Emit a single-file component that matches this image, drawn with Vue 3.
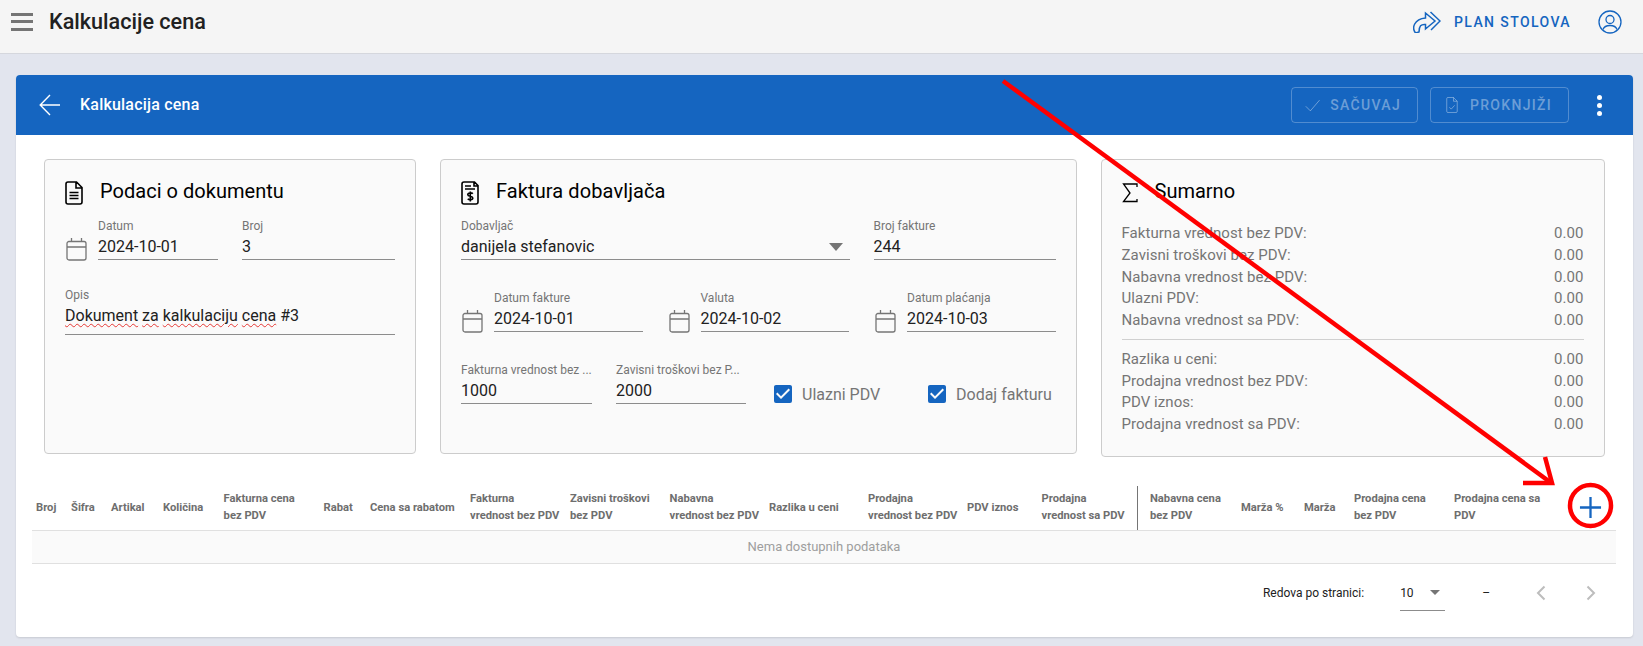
<template>
  <div class="page">
    <header class="topbar">
      <div class="burger"><i></i><i></i><i></i></div>
      <h1 class="app-title">Kalkulacije cena</h1>
      <svg class="plan-icon" viewBox="6 4 28 22"><path d="M18.500 6 28 14l-9.500 8v-4.500C14 17 12 19 12 25l-3.500 1C4.500 21 7 12 18.500 11zM23.500 5 33 14l-9 9" /></svg>
      <span class="plan-text">PLAN STOLOVA</span>
      <svg class="user-icon" viewBox="0 0 24 24"><circle cx="12" cy="12" r="11" /><circle cx="12" cy="9.500" r="4" /><path d="M5 19.500c1-3 4-4 7-4s6 1 7 4" /></svg>
    </header>

    <main class="card">
      <div class="card-head">
        <svg class="back" viewBox="0 0 22 22"><path d="M21 11H1.500M11 1 1.200 11 11 21" /></svg>
        <span class="card-title">Kalkulacija cena</span>
        <button class="head-btn save" disabled>
          <svg viewBox="0 0 20 20"><path d="M1 11l6 6L19 3" /></svg>
          SAČUVAJ
        </button>
        <button class="head-btn post" disabled>
          <svg viewBox="0 0 16 22"><path d="M1 2.500A1.500 1.500 0 0 1 2.500 1H10l5 5v13.500a1.500 1.500 0 0 1-1.500 1.500h-11A1.500 1.500 0 0 1 1 19.500zM10 1v5h5M4.500 14l2.500 2.500 4.500-5" /></svg>
          PROKNJIŽI
        </button>
        <div class="more"><i></i><i></i><i></i></div>
      </div>

      <div class="card-body">
        <div class="panels">
          <section class="panel">
            <div class="panel-title">
              <svg class="doc-icon" viewBox="0 0 18 24"><path d="M1 3a2 2 0 0 1 2-2h8.500L17 6.500V21a2 2 0 0 1-2 2H3a2 2 0 0 1-2-2zM11 1v6h6M4.500 11.500h9M4.500 14.500h9M4.500 17.500h9" /></svg>
              <span class="t1">Podaci o dokumentu</span>
            </div>
            <div class="row">
              <svg class="cal" viewBox="0 0 21 24"><path d="M1 6.500a2 2 0 0 1 2-2h15a2 2 0 0 1 2 2V21a2 2 0 0 1-2 2H3a2 2 0 0 1-2-2zM1 10h19M5.500 1v3.500M15.500 1v3.500" /></svg>
              <div class="field" style="width: 120px">
                <label>Datum</label>
                <div class="value">2024-10-01</div>
              </div>
              <div class="field grow">
                <label>Broj</label>
                <div class="value">3</div>
              </div>
            </div>
            <div class="field opis">
              <label>Opis</label>
              <div class="value">
                <span class="typo">Dokument</span> <span class="typo">za</span> <span class="typo">kalkulaciju</span> <span class="typo">cena</span> #3
              </div>
            </div>
          </section>

          <section class="panel">
            <div class="panel-title">
              <svg class="doc-icon" viewBox="0 0 18 24"><path d="M1 3a2 2 0 0 1 2-2h10.500L17 4.500V21a2 2 0 0 1-2 2H3a2 2 0 0 1-2-2zM13 1v4h4M4 5h6M4 8h10M11.800 12.800c-1-1.300-5-1.300-5 .9s5 1 5 3.200-4 2.200-5 .9M9.300 10.500v10" /></svg>
              <span class="t2">Faktura dobavljača</span>
            </div>
            <div class="row">
              <div class="field grow">
                <label>Dobavljač</label>
                <div class="value">danijela stefanovic<i class="caret"></i></div>
              </div>
              <div class="field" style="width: 182px">
                <label>Broj fakture</label>
                <div class="value">244</div>
              </div>
            </div>
            <div class="row dates">
              <div v-for="d in dates" :key="d.label" class="date">
                <svg class="cal" viewBox="0 0 21 24"><path d="M1 6.500a2 2 0 0 1 2-2h15a2 2 0 0 1 2 2V21a2 2 0 0 1-2 2H3a2 2 0 0 1-2-2zM1 10h19M5.500 1v3.500M15.500 1v3.500" /></svg>
                <div class="field grow">
                  <label>{{ d.label }}</label>
                  <div class="value">{{ d.value }}</div>
                </div>
              </div>
            </div>
            <div class="row amounts">
              <div class="field" style="width: 131px">
                <label>Fakturna vrednost bez ...</label>
                <div class="value">1000</div>
              </div>
              <div class="field" style="width: 130px">
                <label>Zavisni troškovi bez P...</label>
                <div class="value">2000</div>
              </div>
              <div class="check first">
                <svg viewBox="0 0 24 24"><path :d="checkbox" /></svg>
                <span>Ulazni PDV</span>
              </div>
              <div class="check">
                <svg viewBox="0 0 24 24"><path :d="checkbox" /></svg>
                <span>Dodaj fakturu</span>
              </div>
            </div>
          </section>

          <section class="panel tall">
            <div class="panel-title">
              <svg class="sigma" viewBox="0 0 16 20"><path d="M15 4V1H1.500L8 10l-6.500 8.500H15V16" /></svg>
              <span class="t3">Sumarno</span>
            </div>
            <div class="sums">
              <div v-for="s in sumsTop" :key="s" class="sum"><span>{{ s }}</span><span>0.00</span></div>
              <div class="sum-line"></div>
              <div v-for="s in sumsBottom" :key="s" class="sum"><span>{{ s }}</span><span>0.00</span></div>
            </div>
          </section>
        </div>

        <div class="thead">
          <div
            v-for="c in columns"
            :key="c.id"
            class="th"
            :class="{ sep: c.sep, after: c.after }"
            :style="{ width: c.w + 'px' }"
          >{{ c.name }}</div>
          <div class="th add">
            <svg viewBox="0 0 24 24"><path d="M12 1v22M1 12h22" /></svg>
          </div>
        </div>
        <div class="empty">Nema dostupnih podataka</div>
        <div class="pager">
          <span class="per-page">Redova po stranici:</span>
          <div class="page-size">10<i class="caret small"></i></div>
          <span class="range">–</span>
          <svg class="chev" viewBox="0 0 10 16"><path d="M8.500 1.500 2 8l6.500 6.500" /></svg>
          <svg class="chev" viewBox="0 0 10 16"><path d="M1.500 1.500 8 8l-6.500 6.500" /></svg>
        </div>
      </div>
    </main>

    <svg class="markup" viewBox="0 0 1643 646">
      <path d="M1003 81 1550 482" />
      <path d="M1545 457 1552 483 1523 483" />
      <circle cx="1590.500" cy="505.500" r="20.500" />
    </svg>
  </div>
</template>

<script setup>
const checkbox = 'M10,17L5,12L6.41,10.58L10,14.17L17.59,6.58L19,8M19,3H5C3.89,3 3,3.89 3,5V19A2,2 0 0,0 5,21H19A2,2 0 0,0 21,19V5C21,3.89 20.1,3 19,3Z'

const dates = [
  { label: 'Datum fakture', value: '2024-10-01' },
  { label: 'Valuta', value: '2024-10-02' },
  { label: 'Datum plaćanja', value: '2024-10-03' },
]

const sumsTop = [
  'Fakturna vrednost bez PDV:',
  'Zavisni troškovi bez PDV:',
  'Nabavna vrednost bez PDV:',
  'Ulazni PDV:',
  'Nabavna vrednost sa PDV:',
]

const sumsBottom = [
  'Razlika u ceni:',
  'Prodajna vrednost bez PDV:',
  'PDV iznos:',
  'Prodajna vrednost sa PDV:',
]

// \n = same line breaks as the real table header
const columns = [
  { id: 1, name: 'Broj', w: 35 },
  { id: 2, name: 'Šifra', w: 40 },
  { id: 3, name: 'Artikal', w: 52 },
  { id: 4, name: 'Količina', w: 60.6 },
  { id: 5, name: 'Fakturna cena\nbez PDV', w: 100 },
  { id: 6, name: 'Rabat', w: 46.4 },
  { id: 7, name: 'Cena sa rabatom', w: 100 },
  { id: 8, name: 'Fakturna\nvrednost bez PDV', w: 100 },
  { id: 9, name: 'Zavisni troškovi\nbez PDV', w: 99.6 },
  { id: 10, name: 'Nabavna\nvrednost bez PDV', w: 99.4 },
  { id: 11, name: 'Razlika u ceni', w: 99 },
  { id: 12, name: 'Prodajna\nvrednost bez PDV', w: 99 },
  { id: 13, name: 'PDV iznos', w: 74.6 },
  { id: 14, name: 'Prodajna\nvrednost sa PDV', w: 100.4, sep: true },
  { id: 15, name: 'Nabavna cena\nbez PDV', w: 99, after: true },
  { id: 16, name: 'Marža %', w: 63 },
  { id: 17, name: 'Marža', w: 50 },
  { id: 18, name: 'Prodajna cena\nbez PDV', w: 100 },
  { id: 19, name: 'Prodajna cena sa\nPDV', w: 100 },
]
</script>

<style>
html,
body {
  margin: 0;
  background: #e2e5ee;
}
</style>

<style scoped>
.page {
  position: relative;
  width: 1643px;
  height: 646px;
  overflow: hidden;
  background: #e2e5ee;
  font-family: Roboto, "Liberation Sans", sans-serif;
  color: #212121;
}

/* top bar */
.topbar {
  display: flex;
  align-items: center;
  height: 54px;
  padding: 0 21px 10px 11px;
  box-sizing: border-box;
  background: #f5f5f5;
  border-bottom: 1px solid #d5d7dd;
}

.burger {
  display: flex;
  flex-direction: column;
  justify-content: space-between;
  width: 22px;
  height: 18px;
}

.burger i {
  display: block;
  height: 3px;
  background: #757575;
}

.app-title {
  margin: 0 auto 0 16px;
  font-size: 21.6px;
  font-weight: 500;
}

.plan-icon {
  width: 28px;
  height: 22px;
  fill: none;
  stroke: #1565c0;
  stroke-width: 1.5;
}

.plan-text {
  margin: 0 27px 0 13px;
  font-size: 14px;
  font-weight: 500;
  letter-spacing: 1.4px;
  color: #1565c0;
}

.user-icon {
  width: 24px;
  height: 24px;
  fill: none;
  stroke: #1565c0;
  stroke-width: 1.3;
}

/* card */
.card {
  width: 1617px;
  height: 562px;
  margin: 21px 0 0 16px;
  background: #fff;
  border-radius: 4px;
  box-shadow: 0 1px 2px rgba(0, 0, 0, 0.12);
}

.card-head {
  display: flex;
  align-items: center;
  height: 60px;
  padding: 0 31px 0 23px;
  background: #1565c0;
  border-radius: 4px 4px 0 0;
  color: #fff;
}

.back {
  width: 22px;
  height: 22px;
  fill: none;
  stroke: #fff;
  stroke-width: 1.4;
}

.card-title {
  margin: 0 auto 2px 19px;
  font-size: 16px;
  font-weight: 500;
  letter-spacing: 0.2px;
}

.head-btn {
  display: flex;
  align-items: center;
  height: 36px;
  box-sizing: border-box;
  padding: 0 16px 0 13px;
  background: transparent;
  border: 1px solid rgba(255, 255, 255, 0.26);
  border-radius: 4px;
  font-family: inherit;
  font-size: 14px;
  font-weight: 500;
  letter-spacing: 1.3px;
  color: rgba(255, 255, 255, 0.38);
}

.head-btn svg {
  fill: none;
  stroke: rgba(255, 255, 255, 0.38);
  stroke-width: 1.3;
}

.save {
  width: 127px;
}

.save svg {
  width: 17px;
  height: 17px;
  margin-right: 10px;
}

.post {
  width: 139px;
  margin-left: 12px;
  padding-left: 15px;
}

.post svg {
  width: 14px;
  height: 20px;
  margin-right: 12px;
}

.more {
  display: flex;
  flex-direction: column;
  gap: 3px;
  margin: 0 0 0 28px;
}

.more i {
  display: block;
  width: 5px;
  height: 5px;
  border-radius: 50%;
  background: #fff;
}

.card-body {
  padding: 24px 17px 0 16px;
}

/* panels */
.panels {
  display: grid;
  grid-template-columns: 372px 636.5px 504px;
  column-gap: 24px;
  align-items: start;
  margin-left: 12px;
}

.panel {
  height: 295px;
  box-sizing: border-box;
  padding: 21px 20px 0;
  background: #fafafa;
  border: 1px solid #ccc;
  border-radius: 4px;
}

.panel.tall {
  height: 298px;
}

.panel-title {
  display: flex;
  align-items: flex-start;
  height: 24px;
  margin-bottom: 13px;
  font-size: 20px;
  line-height: 20px;
  color: #000;
}

.doc-icon {
  width: 18px;
  height: 24px;
  fill: none;
  stroke: #000;
  stroke-width: 1.6;
}

.sigma {
  width: 16px;
  height: 20px;
  margin-top: 2px;
  fill: none;
  stroke: #000;
  stroke-width: 1.3;
}

.t1 {
  margin-left: 17px;
  letter-spacing: 0.03px;
}

.t2 {
  margin-left: 17px;
  letter-spacing: 0.1px;
}

.t3 {
  margin-left: 17px;
}

.row {
  display: flex;
  gap: 24px;
}

.field {
  display: flex;
  flex-direction: column;
  flex: none;
  min-width: 0;
}

.field.grow {
  flex: 1;
}

.field label {
  height: 16px;
  font-size: 12px;
  line-height: 16px;
  color: #757575;
  white-space: nowrap;
}

.value {
  display: flex;
  align-items: center;
  height: 25px;
  font-size: 16px;
  color: #212121;
  border-bottom: 1px solid #8c8c8c;
  white-space: pre;
}

.cal {
  flex: none;
  width: 21px;
  height: 24px;
  margin: 19px -13px 0 1px;
  fill: none;
  stroke: #757575;
  stroke-width: 1.3;
}

.opis {
  margin-top: 26px;
}

.opis .value {
  display: block;
  height: 28px;
  padding-top: 3px;
}

.typo {
  text-decoration: underline wavy #e53935 1px;
  text-underline-offset: 2px;
}

.caret {
  width: 0;
  height: 0;
  margin: 0 7px 0 auto;
  border-left: 7px solid transparent;
  border-right: 7px solid transparent;
  border-top: 8px solid #757575;
}

.dates {
  gap: 25px;
  margin-top: 30px;
}

.date {
  display: flex;
  flex: 1;
  gap: 24px;
  min-width: 0;
}

.amounts {
  margin-top: 29px;
}

.check {
  display: flex;
  align-items: center;
  margin: 20px 0 0;
  font-size: 16px;
  color: #757575;
  white-space: nowrap;
}

.check.first {
  width: 130px;
  flex: none;
  margin-left: 4px;
}

.check svg {
  width: 24px;
  height: 24px;
  flex: none;
  margin: 0 7px 0 -3px;
  fill: #1565c0;
}

.sums {
  margin-top: 18px;
}

.sum {
  display: flex;
  justify-content: space-between;
  height: 21.750px;
  font-size: 15px;
  line-height: 21.750px;
  letter-spacing: 0.05px;
  color: #757575;
}

.sum-line {
  height: 1px;
  margin: 7px 0 9px;
  background: #d0d0d0;
}

/* table */
.thead {
  display: flex;
  height: 44px;
  margin-top: 29px;
  border-bottom: 1px solid #e0e0e0;
}

.th {
  display: flex;
  align-items: center;
  flex: none;
  box-sizing: border-box;
  padding: 0 0 2px 4px;
  font-size: 11.2px;
  font-weight: 700;
  line-height: 17px;
  white-space: pre-line;
  color: #6e6e6e;
}

.th.sep {
  border-right: 1px solid #757575;
}

.th.after {
  padding-left: 12px;
}

.th.add {
  flex: 1;
  justify-content: flex-start;
  padding-left: 29px;
}

.add svg {
  width: 23px;
  height: 23px;
  fill: none;
  stroke: #1565c0;
  stroke-width: 2.4;
}

.empty {
  height: 32px;
  background: #fafafa;
  border-bottom: 1px solid #e0e0e0;
  font-size: 13px;
  line-height: 32px;
  text-align: center;
  color: #9e9e9e;
}

.pager {
  display: flex;
  align-items: center;
  height: 58px;
  padding-right: 20px;
  justify-content: flex-end;
  font-size: 12px;
  color: #212121;
}

.page-size {
  display: flex;
  align-items: center;
  width: 45px;
  height: 35px;
  margin-left: 36px;
  border-bottom: 1px solid #8c8c8c;
}

.caret.small {
  margin: 0 5px 0 auto;
  border-left-width: 5px;
  border-right-width: 5px;
  border-top-width: 5px;
}

.range {
  margin: 0 46px 0 37px;
}

.chev {
  width: 10px;
  height: 16px;
  fill: none;
  stroke: #bdbdbd;
  stroke-width: 2;
}

.chev + .chev {
  margin-left: 40px;
}

/* red annotation drawn over the page */
.markup {
  position: absolute;
  top: 0;
  left: 0;
  width: 1643px;
  height: 646px;
  fill: none;
  stroke: #f00;
  stroke-width: 4.5;
  pointer-events: none;
}
</style>
